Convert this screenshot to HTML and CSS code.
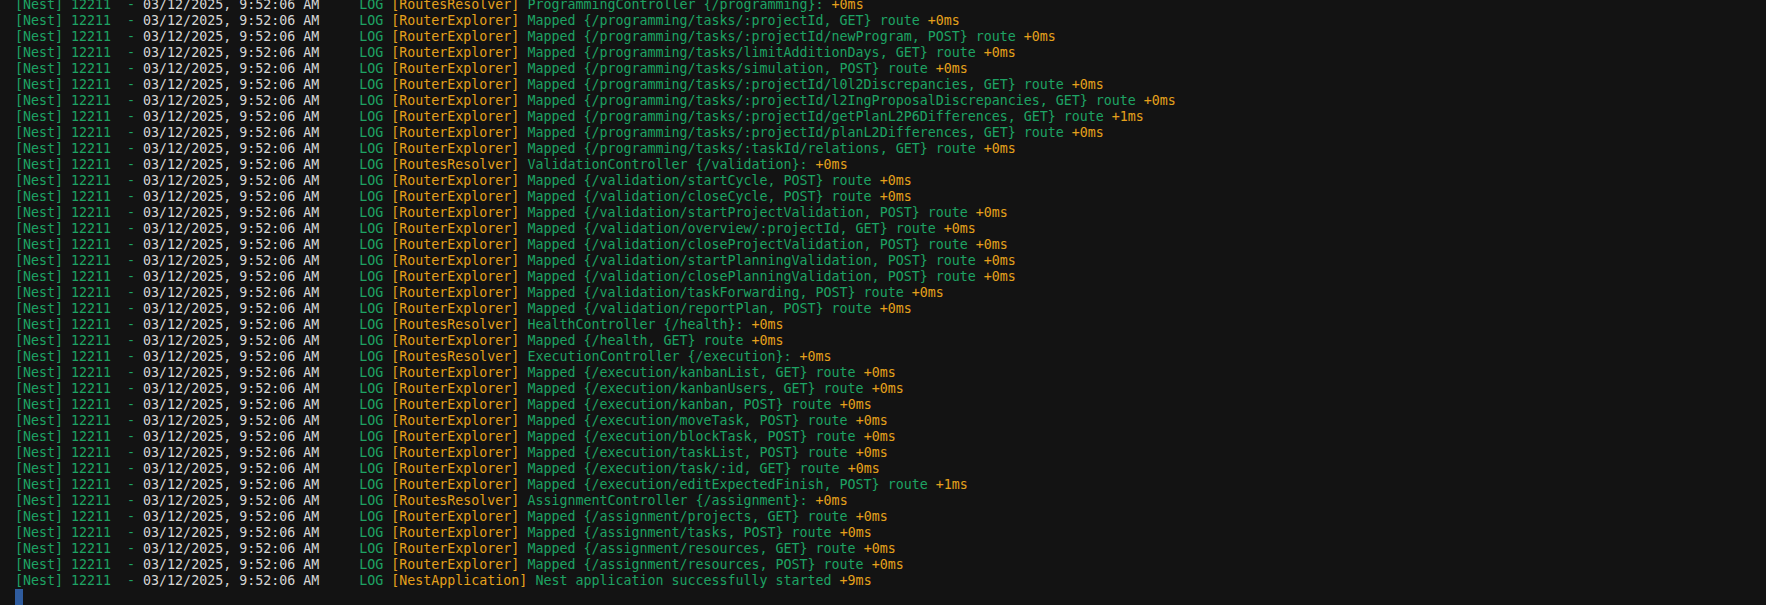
FILE: index.html
```html
<!DOCTYPE html>
<html lang="en">
<head>
    <meta charset="UTF-8">
    <meta name="viewport" content="width=device-width, initial-scale=1.0">
    <title>Terminal</title>
    <link rel="stylesheet" href="styles.css">
</head>
<body>
<pre class="terminal"><span class="g">[Nest] 12211  - </span>03/12/2025, 9:52:06 AM <span class="g">    LOG</span> <span class="y">[RoutesResolver]</span> <span class="g">ProgrammingController {/programming}:</span> <span class="y">+0ms</span>
<span class="g">[Nest] 12211  - </span>03/12/2025, 9:52:06 AM <span class="g">    LOG</span> <span class="y">[RouterExplorer]</span> <span class="g">Mapped {/programming/tasks/:projectId, GET} route</span> <span class="y">+0ms</span>
<span class="g">[Nest] 12211  - </span>03/12/2025, 9:52:06 AM <span class="g">    LOG</span> <span class="y">[RouterExplorer]</span> <span class="g">Mapped {/programming/tasks/:projectId/newProgram, POST} route</span> <span class="y">+0ms</span>
<span class="g">[Nest] 12211  - </span>03/12/2025, 9:52:06 AM <span class="g">    LOG</span> <span class="y">[RouterExplorer]</span> <span class="g">Mapped {/programming/tasks/limitAdditionDays, GET} route</span> <span class="y">+0ms</span>
<span class="g">[Nest] 12211  - </span>03/12/2025, 9:52:06 AM <span class="g">    LOG</span> <span class="y">[RouterExplorer]</span> <span class="g">Mapped {/programming/tasks/simulation, POST} route</span> <span class="y">+0ms</span>
<span class="g">[Nest] 12211  - </span>03/12/2025, 9:52:06 AM <span class="g">    LOG</span> <span class="y">[RouterExplorer]</span> <span class="g">Mapped {/programming/tasks/:projectId/l0l2Discrepancies, GET} route</span> <span class="y">+0ms</span>
<span class="g">[Nest] 12211  - </span>03/12/2025, 9:52:06 AM <span class="g">    LOG</span> <span class="y">[RouterExplorer]</span> <span class="g">Mapped {/programming/tasks/:projectId/l2IngProposalDiscrepancies, GET} route</span> <span class="y">+0ms</span>
<span class="g">[Nest] 12211  - </span>03/12/2025, 9:52:06 AM <span class="g">    LOG</span> <span class="y">[RouterExplorer]</span> <span class="g">Mapped {/programming/tasks/:projectId/getPlanL2P6Differences, GET} route</span> <span class="y">+1ms</span>
<span class="g">[Nest] 12211  - </span>03/12/2025, 9:52:06 AM <span class="g">    LOG</span> <span class="y">[RouterExplorer]</span> <span class="g">Mapped {/programming/tasks/:projectId/planL2Differences, GET} route</span> <span class="y">+0ms</span>
<span class="g">[Nest] 12211  - </span>03/12/2025, 9:52:06 AM <span class="g">    LOG</span> <span class="y">[RouterExplorer]</span> <span class="g">Mapped {/programming/tasks/:taskId/relations, GET} route</span> <span class="y">+0ms</span>
<span class="g">[Nest] 12211  - </span>03/12/2025, 9:52:06 AM <span class="g">    LOG</span> <span class="y">[RoutesResolver]</span> <span class="g">ValidationController {/validation}:</span> <span class="y">+0ms</span>
<span class="g">[Nest] 12211  - </span>03/12/2025, 9:52:06 AM <span class="g">    LOG</span> <span class="y">[RouterExplorer]</span> <span class="g">Mapped {/validation/startCycle, POST} route</span> <span class="y">+0ms</span>
<span class="g">[Nest] 12211  - </span>03/12/2025, 9:52:06 AM <span class="g">    LOG</span> <span class="y">[RouterExplorer]</span> <span class="g">Mapped {/validation/closeCycle, POST} route</span> <span class="y">+0ms</span>
<span class="g">[Nest] 12211  - </span>03/12/2025, 9:52:06 AM <span class="g">    LOG</span> <span class="y">[RouterExplorer]</span> <span class="g">Mapped {/validation/startProjectValidation, POST} route</span> <span class="y">+0ms</span>
<span class="g">[Nest] 12211  - </span>03/12/2025, 9:52:06 AM <span class="g">    LOG</span> <span class="y">[RouterExplorer]</span> <span class="g">Mapped {/validation/overview/:projectId, GET} route</span> <span class="y">+0ms</span>
<span class="g">[Nest] 12211  - </span>03/12/2025, 9:52:06 AM <span class="g">    LOG</span> <span class="y">[RouterExplorer]</span> <span class="g">Mapped {/validation/closeProjectValidation, POST} route</span> <span class="y">+0ms</span>
<span class="g">[Nest] 12211  - </span>03/12/2025, 9:52:06 AM <span class="g">    LOG</span> <span class="y">[RouterExplorer]</span> <span class="g">Mapped {/validation/startPlanningValidation, POST} route</span> <span class="y">+0ms</span>
<span class="g">[Nest] 12211  - </span>03/12/2025, 9:52:06 AM <span class="g">    LOG</span> <span class="y">[RouterExplorer]</span> <span class="g">Mapped {/validation/closePlanningValidation, POST} route</span> <span class="y">+0ms</span>
<span class="g">[Nest] 12211  - </span>03/12/2025, 9:52:06 AM <span class="g">    LOG</span> <span class="y">[RouterExplorer]</span> <span class="g">Mapped {/validation/taskForwarding, POST} route</span> <span class="y">+0ms</span>
<span class="g">[Nest] 12211  - </span>03/12/2025, 9:52:06 AM <span class="g">    LOG</span> <span class="y">[RouterExplorer]</span> <span class="g">Mapped {/validation/reportPlan, POST} route</span> <span class="y">+0ms</span>
<span class="g">[Nest] 12211  - </span>03/12/2025, 9:52:06 AM <span class="g">    LOG</span> <span class="y">[RoutesResolver]</span> <span class="g">HealthController {/health}:</span> <span class="y">+0ms</span>
<span class="g">[Nest] 12211  - </span>03/12/2025, 9:52:06 AM <span class="g">    LOG</span> <span class="y">[RouterExplorer]</span> <span class="g">Mapped {/health, GET} route</span> <span class="y">+0ms</span>
<span class="g">[Nest] 12211  - </span>03/12/2025, 9:52:06 AM <span class="g">    LOG</span> <span class="y">[RoutesResolver]</span> <span class="g">ExecutionController {/execution}:</span> <span class="y">+0ms</span>
<span class="g">[Nest] 12211  - </span>03/12/2025, 9:52:06 AM <span class="g">    LOG</span> <span class="y">[RouterExplorer]</span> <span class="g">Mapped {/execution/kanbanList, GET} route</span> <span class="y">+0ms</span>
<span class="g">[Nest] 12211  - </span>03/12/2025, 9:52:06 AM <span class="g">    LOG</span> <span class="y">[RouterExplorer]</span> <span class="g">Mapped {/execution/kanbanUsers, GET} route</span> <span class="y">+0ms</span>
<span class="g">[Nest] 12211  - </span>03/12/2025, 9:52:06 AM <span class="g">    LOG</span> <span class="y">[RouterExplorer]</span> <span class="g">Mapped {/execution/kanban, POST} route</span> <span class="y">+0ms</span>
<span class="g">[Nest] 12211  - </span>03/12/2025, 9:52:06 AM <span class="g">    LOG</span> <span class="y">[RouterExplorer]</span> <span class="g">Mapped {/execution/moveTask, POST} route</span> <span class="y">+0ms</span>
<span class="g">[Nest] 12211  - </span>03/12/2025, 9:52:06 AM <span class="g">    LOG</span> <span class="y">[RouterExplorer]</span> <span class="g">Mapped {/execution/blockTask, POST} route</span> <span class="y">+0ms</span>
<span class="g">[Nest] 12211  - </span>03/12/2025, 9:52:06 AM <span class="g">    LOG</span> <span class="y">[RouterExplorer]</span> <span class="g">Mapped {/execution/taskList, POST} route</span> <span class="y">+0ms</span>
<span class="g">[Nest] 12211  - </span>03/12/2025, 9:52:06 AM <span class="g">    LOG</span> <span class="y">[RouterExplorer]</span> <span class="g">Mapped {/execution/task/:id, GET} route</span> <span class="y">+0ms</span>
<span class="g">[Nest] 12211  - </span>03/12/2025, 9:52:06 AM <span class="g">    LOG</span> <span class="y">[RouterExplorer]</span> <span class="g">Mapped {/execution/editExpectedFinish, POST} route</span> <span class="y">+1ms</span>
<span class="g">[Nest] 12211  - </span>03/12/2025, 9:52:06 AM <span class="g">    LOG</span> <span class="y">[RoutesResolver]</span> <span class="g">AssignmentController {/assignment}:</span> <span class="y">+0ms</span>
<span class="g">[Nest] 12211  - </span>03/12/2025, 9:52:06 AM <span class="g">    LOG</span> <span class="y">[RouterExplorer]</span> <span class="g">Mapped {/assignment/projects, GET} route</span> <span class="y">+0ms</span>
<span class="g">[Nest] 12211  - </span>03/12/2025, 9:52:06 AM <span class="g">    LOG</span> <span class="y">[RouterExplorer]</span> <span class="g">Mapped {/assignment/tasks, POST} route</span> <span class="y">+0ms</span>
<span class="g">[Nest] 12211  - </span>03/12/2025, 9:52:06 AM <span class="g">    LOG</span> <span class="y">[RouterExplorer]</span> <span class="g">Mapped {/assignment/resources, GET} route</span> <span class="y">+0ms</span>
<span class="g">[Nest] 12211  - </span>03/12/2025, 9:52:06 AM <span class="g">    LOG</span> <span class="y">[RouterExplorer]</span> <span class="g">Mapped {/assignment/resources, POST} route</span> <span class="y">+0ms</span>
<span class="g">[Nest] 12211  - </span>03/12/2025, 9:52:06 AM <span class="g">    LOG</span> <span class="y">[NestApplication]</span> <span class="g">Nest application successfully started</span> <span class="y">+9ms</span>
<span class="cursor"> </span></pre>
</body>
</html>
```

FILE: styles.css
```css
html, body {
    background-color: #131313;
}
body {
    margin: 0;
    height: 605px;
    overflow: hidden;
}
.terminal {
    margin: -3px 0 0 0;
    padding: 0 15px;
    font-family: "DejaVu Sans Mono", monospace;
    font-size: 13.3px;
    line-height: 16px;
    color: #d6d6d6;
    white-space: pre;
}
.g { color: #1ea364; }
.y { color: #e5a11c; }
.cursor {
    display: inline-block;
    width: 8px;
    height: 16px;
    vertical-align: top;
    background-color: #2f5c9e;
}
```
